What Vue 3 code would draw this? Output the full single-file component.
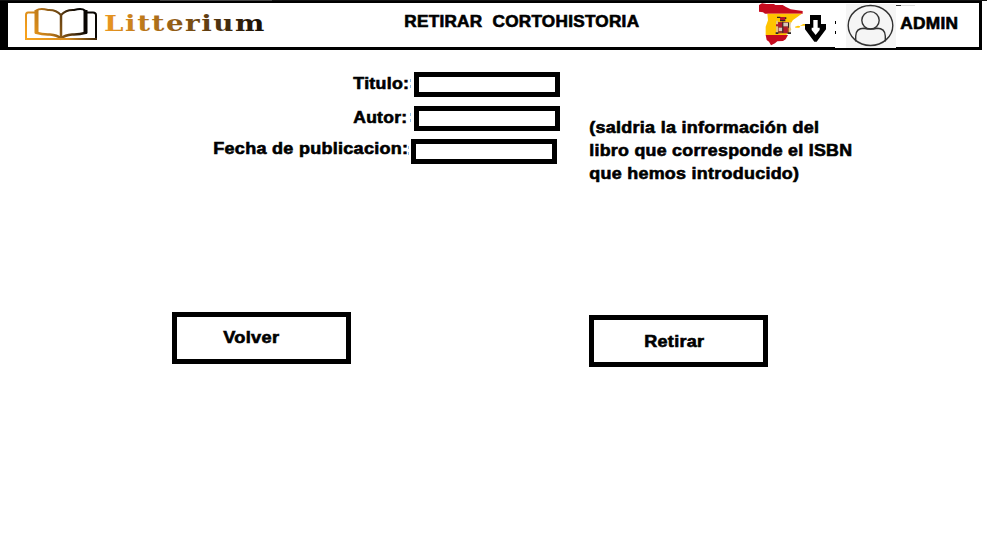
<script setup>
import { h } from 'vue'

// One line of bold label text fitted to a fixed width; the baseline sits at y=16.
const Label = (props) =>
  h('svg', { class: 'label', width: props.w, height: 23 }, [
    h('text', { x: 0.3, y: 16, textLength: props.w, lengthAdjust: 'spacingAndGlyphs' }, props.text),
  ])
Label.props = ['text', 'w']

const fields = [
  { name: 'titulo', text: 'Titulo:', w: 56 },
  { name: 'autor', text: 'Autor:', w: 54 },
  { name: 'fecha', text: 'Fecha de publicacion:', w: 195 },
]
const note = [
  { text: '(saldria la información del', w: 230 },
  { text: 'libro que corresponde el ISBN', w: 263 },
  { text: 'que hemos introducido)', w: 210 },
]
</script>

<template>
  <div class="page">
    <div class="edge"></div>
    <header class="bar">
      <svg class="book" width="74" height="34" viewBox="1 0 74 34">
        <defs>
          <linearGradient id="gold" gradientUnits="userSpaceOnUse" x1="4" y1="28" x2="60" y2="4">
            <stop offset="0" stop-color="#f6a01c" />
            <stop offset=".35" stop-color="#b87518" />
            <stop offset=".65" stop-color="#5e3d12" />
            <stop offset=".9" stop-color="#080502" />
          </linearGradient>
          <linearGradient id="base" gradientUnits="userSpaceOnUse" x1="0" y1="0" x2="73" y2="0">
            <stop offset="0" stop-color="#f8a51f" />
            <stop offset=".6" stop-color="#d98d1f" />
            <stop offset="1" stop-color="#40290c" />
          </linearGradient>
        </defs>
        <g fill="none" stroke="url(#gold)" stroke-width="2">
          <path d="M12 4.500H4Q2 4.500 2 7V31M62 4.500H69Q72 4.500 72 7V31" />
          <path d="M12 2.500Q16 0 24 2Q32 1.500 37 7Q42 1.500 50 2Q58 0 61 2.500" />
          <path d="M12.500 2V25M61.500 2V25" stroke-width="4" />
          <path d="M11 24.500Q20 27 26 26.500Q33 27 37 30.500Q41 27 48 26.500Q54 27 63 24.500" stroke-width="2.500" />
          <path d="M37 6V30" stroke-width="2.500" />
        </g>
        <path d="M1 31H73" fill="none" stroke="url(#base)" stroke-width="2" />
      </svg>
      <svg class="brand" width="162" height="30">
        <defs>
          <linearGradient id="word" gradientUnits="userSpaceOnUse" x1="0" y1="0" x2="162" y2="0">
            <stop offset="0" stop-color="#ec9820" />
            <stop offset=".35" stop-color="#a66a18" />
            <stop offset=".7" stop-color="#4f330f" />
            <stop offset="1" stop-color="#120b03" />
          </linearGradient>
        </defs>
        <text x="-1" y="22" textLength="162" lengthAdjust="spacingAndGlyphs" fill="url(#word)">Litterium</text>
      </svg>
      <Label class="title" text="RETIRAR&nbsp; CORTOHISTORIA" :w="235" />
      <svg class="flag" width="46" height="43" viewBox="24 12 138 129">
        <path fill="#c60b1e" d="M27 15L36 10L50 12H72L76 15H98L108 21L122 28L158 33V41H45L39 37L27 35Z" />
        <path fill="#ffc400" d="M52 41H156L150 45L141 52L129 60L121 72L119 79L124 88L117 98L108 105H47V80L54 61Z" />
        <path fill="#c60b1e" d="M47 105H114L107 118L99 123L82 124L75 130L63 136L57 125L50 120Z" />
        <path fill="#ffc400" d="M135 80L144 77L151 79L148 83H136ZM150 77L160 72H168V77Z" />
        <path fill="#9a3a30" d="M84 66H116V100H84Z" />
        <path fill="#d8c5b8" d="M79 62H83V99H79ZM118 66H122V99H118ZM99 68H114V79H99ZM86 83H97V93H86Z" />
        <path fill="#b5152b" d="M90 51H106V61H90ZM78 73H84V79H78ZM85 68H97V80H85ZM100 82H112V98H100Z" />
        <path fill="#2b2626" d="M81 50H91V54H81ZM105 52H109V57H105ZM90 60H106V64H90ZM97 65H100V98H97ZM77 97H85V102H77ZM113 97H123V102H113ZM114 68H117V83H114Z" />
      </svg>
      <svg class="arrow" width="22" height="27" viewBox="180 45 66 81">
        <path fill-rule="evenodd" d="M195 45H228V72H243V88L215 125H208L180 88V72H195ZM205 60V83H200V90L212 105L224 90V83H218V60Z" />
      </svg>
      <svg class="dots" width="2" height="14"><path d="M0 0H1V3H0ZM0 10H1V13H0Z" /></svg>
      <svg class="avatar" width="61" height="44" viewBox="0 0 61 44">
        <path fill="#fff" d="M0 0H61V44H0Z" />
        <path fill="#f5f5f5" d="M11 0H61V44H11Z" />
        <g fill="none" stroke="#333" stroke-width="1.400">
          <ellipse cx="35.500" cy="21.500" rx="22.300" ry="20" />
          <circle cx="35.500" cy="16.300" r="8.700" />
          <path d="M20.700 37.500V32Q21 24.300 29 24.300Q35.500 26 42 24.300Q50 24.300 50.300 32V37.500" />
        </g>
        <path d="M61 1.500H66" stroke="#333" />
        <path d="M66 1.500H80" stroke="#ddd" />
      </svg>
      <Label class="admin" text="ADMIN" :w="58" />
    </header>

    <main>
      <section class="info">
        <form class="fields" @submit.prevent>
          <label v-for="f in fields" :key="f.name" class="row" :class="f.name">
            <Label :text="f.text" :w="f.w" />
            <svg class="ticks" width="1" height="9"><path d="M0 0H1V3H0ZM0 6H1V9H0Z" fill="#91bde4" /></svg>
            <input type="text" :name="f.name" />
          </label>
        </form>
        <div class="note">
          <Label v-for="line in note" :key="line.text" :text="line.text" :w="line.w" />
        </div>
      </section>
      <section class="actions">
        <button type="button" class="back"><Label text="Volver" :w="56" /></button>
        <button type="button" class="remove"><Label text="Retirar" :w="60" /></button>
      </section>
    </main>
  </div>
</template>

<style>
body { background: #fff; }
.label {
  display: block;
  flex: none;
  overflow: visible;
  font: bold 16px "Liberation Sans", Arial, sans-serif;
  letter-spacing: 0.25px;
  fill: #000;
  stroke: #000;
  stroke-width: 0.6px;
}
</style>

<style scoped>
.page { width: 987px; height: 551px; overflow: hidden; background: #fff; }
.edge {
  height: 1px;
  background: linear-gradient(90deg, #111 160px, #444 160px, #444 272px, #111 272px);
}
.bar {
  box-sizing: border-box;
  display: flex;
  align-items: flex-start;
  width: 982px;
  height: 49px;
  border: solid #000;
  border-width: 2px 3px 3px 8px;
}
.bar > svg { flex: none; }
.book { margin: 5px 0 0 17px; }
.brand {
  margin: 6px 0 0 6px;
  overflow: visible;
  font: bold 21.5px "DejaVu Serif", serif;
  letter-spacing: 1.2px;
}
.title { margin: 8px 0 0 137px; }
.flag { margin: 1px 0 0 119px; overflow: visible; }
.arrow { margin: 12px 0 0 1px; }
.dots { position: relative; z-index: 1; margin: 18px 0 0 8px; }
.avatar { margin: 1px 0 0 -2px; overflow: visible; }
.admin { margin: 10px 0 0 4px; }

.info { display: flex; height: 262px; }
.fields { display: flex; flex-direction: column; width: 560px; padding-top: 22px; }
.row { display: flex; justify-content: flex-end; height: 25px; }
.row .label { margin-top: 1px; }
.ticks { flex: none; margin: 7px 3px 0 1px; }
.autor { margin-top: 9px; }
.autor .ticks { margin-left: 3px; }
.fecha { margin: 8px 3px 0 0; }
.fecha .ticks { margin: 7px 2px 0 0; }
.fecha .label { margin-top: -1px; }
.row input {
  box-sizing: border-box;
  width: 146px;
  height: 25px;
  margin: 0;
  padding: 0 4px;
  border: 5px solid #000;
  border-radius: 0;
  background: #fff;
  outline: none;
}
.note { padding: 67px 0 0 29px; }

.actions { display: flex; align-items: flex-start; gap: 238px; padding-left: 172px; }
.actions button {
  box-sizing: border-box;
  display: flex;
  align-items: flex-start;
  width: 179px;
  height: 52px;
  margin: 0;
  padding: 10px 0 0 46px;
  border: 5px solid #000;
  border-radius: 0;
  background: #fff;
}
.actions .remove { margin-top: 3px; padding: 11px 0 0 50px; }
</style>
